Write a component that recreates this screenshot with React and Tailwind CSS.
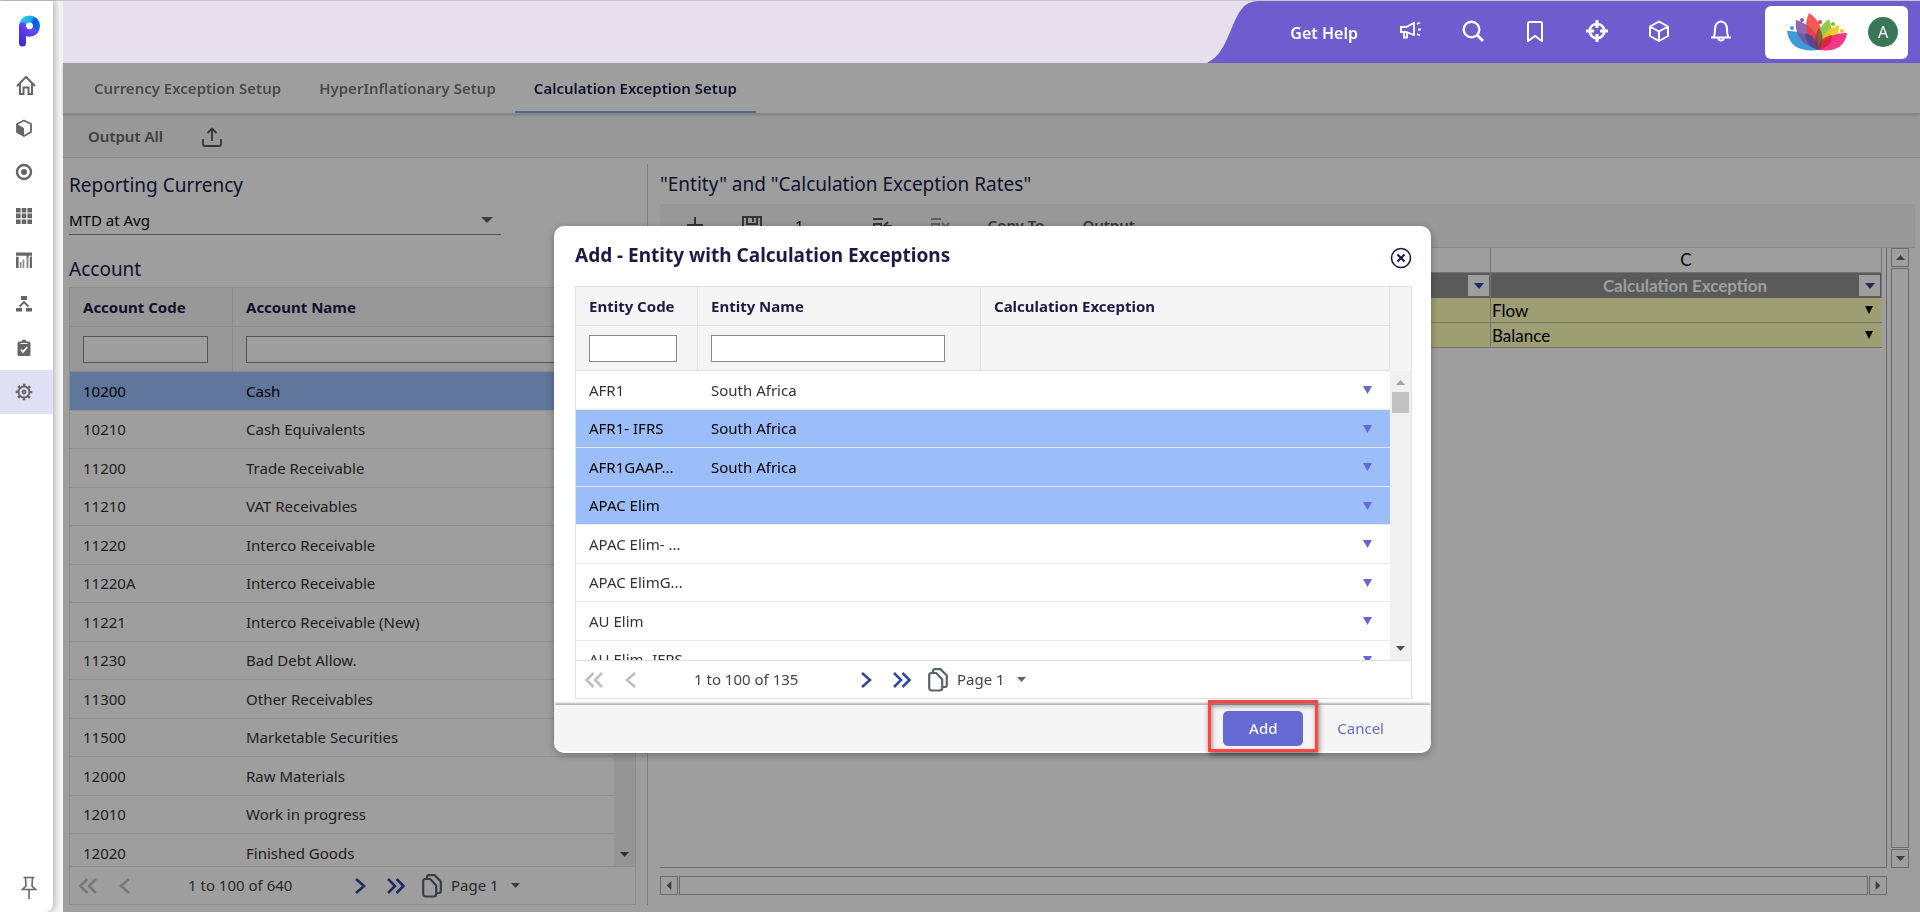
import React, { useState } from "react";
import clsx from "clsx";

const ACCOUNTS = [
  ["10200", "Cash"],
  ["10210", "Cash Equivalents"],
  ["11200", "Trade Receivable"],
  ["11210", "VAT Receivables"],
  ["11220", "Interco Receivable"],
  ["11220A", "Interco Receivable"],
  ["11221", "Interco Receivable (New)"],
  ["11230", "Bad Debt Allow."],
  ["11300", "Other Receivables"],
  ["11500", "Marketable Securities"],
  ["12000", "Raw Materials"],
  ["12010", "Work in progress"],
  ["12020", "Finished Goods"],
];

const ENTITIES = [
  ["AFR1", "South Africa"],
  ["AFR1- IFRS", "South Africa"],
  ["AFR1GAAP...", "South Africa"],
  ["APAC Elim", ""],
  ["APAC Elim- ...", ""],
  ["APAC ElimG...", ""],
  ["AU Elim", ""],
  ["AU Elim- IFRS", ""],
];

const TABS = ["Currency Exception Setup", "HyperInflationary Setup", "Calculation Exception Setup"];

// --- Icons ---
function Triangle({ dir = "down", className }) {
  const points = {
    down: "0,0 10,0 5,6",
    up: "0,6 10,6 5,0",
    left: "8,0 8,6 2,3",
    right: "2,0 2,6 8,3",
  };
  return (
    <svg viewBox="0 0 10 6" preserveAspectRatio="none" className={className} fill="currentColor" aria-hidden="true">
      <polygon points={points[dir]} />
    </svg>
  );
}

function Chevrons({ left, double, className }) {
  return (
    <svg width="20" height="18" viewBox="0 0 20 18" fill="none" stroke="currentColor" strokeWidth="2.6" className={className} aria-hidden="true">
      <g transform={left ? "translate(20 0) scale(-1 1)" : undefined}>
        {double ? <path d="M2 2l7 7-7 7M10.500 2l7 7-7 7" /> : <path d="M6 2l8 7-8 7" />}
      </g>
    </svg>
  );
}

function Logo() {
  return (
    <svg width="24" height="34" viewBox="0 0 24 34" fill="none" aria-hidden="true">
      <defs>
        <linearGradient id="ring" x1="2" y1="4" x2="22" y2="16" gradientUnits="userSpaceOnUse">
          <stop offset="0" stopColor="#35c8f5" />
          <stop offset="0.45" stopColor="#18b2f2" />
          <stop offset="0.6" stopColor="#0a55dc" />
          <stop offset="1" stopColor="#0b6cff" />
        </linearGradient>
        <linearGradient id="stem" x1="2" y1="32" x2="18" y2="12" gradientUnits="userSpaceOnUse">
          <stop offset="0" stopColor="#3d22c4" />
          <stop offset="1" stopColor="#6a4dff" />
        </linearGradient>
      </defs>
      <circle cx="12.500" cy="11" r="7" stroke="url(#ring)" strokeWidth="7" />
      <path d="M5.500 11a7 7 0 0 0 7 7c3 0 5-1.500 6.200-3.800" stroke="url(#stem)" strokeWidth="7" />
      <path d="M5.500 11V28" stroke="url(#stem)" strokeWidth="7" strokeLinecap="round" />
    </svg>
  );
}

function Lotus() {
  return (
    <svg width="62" height="38" viewBox="0 0 62 38" aria-hidden="true">
      <g className="mix-blend-multiply">
        <path d="M1 18c14 0 28 5 32 19C15 39 3 34 1 18z" fill="#3f9bd8" />
        <path d="M10 7c14 4 24 14 23 30C17 33 8 22 10 7z" fill="#7d4fa0" fillOpacity="0.85" />
        <path d="M23 0c12 8 17 22 10 37C20 27 17 13 23 0z" fill="#f03c3c" fillOpacity="0.85" />
        <path d="M43 6c5 12 2 22-10 31C29 22 33 13 43 6z" fill="#7ac231" fillOpacity="0.85" />
        <path d="M53 12c1 12-6 20-20 25C35 22 42 15 53 12z" fill="#f0c419" fillOpacity="0.85" />
        <path d="M61 20C59 34 49 39 33 37C38 25 47 20 61 20z" fill="#f0227c" fillOpacity="0.9" />
        <path d="M19 20c7 2 12 6 14 17C23 34 19 28 19 20z" fill="#3b3f98" fillOpacity="0.7" />
        <path d="M46 22c0 7-4 12-13 15C32 29 36 24 46 22z" fill="#d41f3a" fillOpacity="0.8" />
        <path d="M33 15c5 8 5 15 0 22C28 30 28 23 33 15z" fill="#7b2c35" fillOpacity="0.6" />
      </g>
      <circle cx="6" cy="15" r="2" fill="#3f9bd8" />
      <circle cx="16" cy="7" r="2" fill="#8a5aa8" />
      <circle cx="34" cy="9" r="2" fill="#f03c3c" />
      <circle cx="47" cy="11" r="2" fill="#7ac231" />
      <circle cx="56" cy="18" r="2" fill="#f0c419" />
    </svg>
  );
}

const NAV = [
  {
    label: "Home",
    icon: (
      <g fill="none" stroke="currentColor" strokeWidth="2" transform="translate(2 1)">
        <path d="M1 11L10 2l9 9" />
        <path d="M4 9v10h3.500v-6.500h5V19H16V9" />
      </g>
    ),
  },
  {
    label: "Models",
    icon: (
      <g>
        <path d="M10 2.500l7 3.500v8l-7 4-7-4V6z" fill="none" stroke="currentColor" strokeWidth="1.800" />
        <path d="M3 6l7 4v8l-7-4z" fill="currentColor" />
      </g>
    ),
  },
  {
    label: "Targets",
    icon: (
      <g>
        <circle cx="10" cy="10" r="7" fill="none" stroke="currentColor" strokeWidth="2.400" />
        <circle cx="10" cy="10" r="3" fill="currentColor" />
      </g>
    ),
  },
  {
    label: "Sheets",
    icon: <path d="M2 2h4.600v4.400H2zM7.700 2h4.600v4.400H7.700zM13.400 2H18v4.400h-4.600zM2 7.600h4.600v4.600H2zM7.700 7.600h4.600v4.600H7.700zM13.400 7.600H18v4.600h-4.600zM2 13.400h4.600V18H2zM7.700 13.400h4.600V18H7.700zM13.400 13.400H18V18h-4.600z" fill="currentColor" />,
  },
  {
    label: "Reports",
    icon: (
      <g fill="currentColor">
        <path d="M2 2.500h16v3.300H2zM15.800 6.500H18V18h-2.200zM12.500 5h2v3.500h-2zM2 6.800h2.600V18H2z" />
        <path d="M5.800 12h1.700v6H5.800zM8.600 9.500h1.700V18H8.600zM12.500 8.500h2V18h-2z" fillOpacity="0.75" />
      </g>
    ),
  },
  {
    label: "Structure",
    icon: (
      <g>
        <path d="M7 2h6v4H7zM2 14h6v3.500H2zM12 14h6v3.500h-6z" fill="currentColor" />
        <path d="M5.500 12.500L10 8l4.500 4.500" fill="none" stroke="currentColor" strokeWidth="1.800" />
      </g>
    ),
  },
  {
    label: "Tasks",
    icon: (
      <g>
        <path d="M5 3.500h2.500a2.500 2 0 0 1 5 0H15A1.500 1.500 0 0 1 16.500 5v11.500A1.500 1.500 0 0 1 15 18H5a1.500 1.500 0 0 1-1.500-1.500V5A1.500 1.500 0 0 1 5 3.500z" fill="currentColor" />
        <path d="M6.500 5.500h7" stroke="#fff" strokeWidth="1" />
        <path d="M6.800 11.500l2.200 2.400 4.200-4.800" stroke="#fff" strokeWidth="1.700" fill="none" />
      </g>
    ),
  },
  {
    label: "Settings",
    active: true,
    icon: (
      <g fill="none" stroke="currentColor">
        <circle cx="10" cy="10" r="5.500" strokeWidth="2" />
        <circle cx="10" cy="10" r="7.200" strokeWidth="2.200" strokeDasharray="2.600 3.055" strokeDashoffset="1.300" />
        <circle cx="10" cy="10" r="1.500" strokeWidth="1.800" />
      </g>
    ),
  },
];

const HEADER_ICONS = [
  {
    label: "Announcements",
    icon: (
      <>
        <path d="M1 7h5l8-4v12l-8-3H1zM4 12v5.500h3V12.500" strokeWidth="1.800" />
        <path d="M17 4l3-1.500M18 9.500h3M17 14l3 1.500" strokeWidth="1.800" />
      </>
    ),
  },
  { label: "Search", icon: <><circle cx="9.500" cy="9.500" r="7.800" strokeWidth="2.400" /><path d="M15 15L21 21" strokeWidth="2.800" /></> },
  { label: "Bookmarks", icon: <path d="M4 21V3.500A1.500 1.500 0 0 1 5.500 2h11A1.500 1.500 0 0 1 18 3.500V21l-7-5z" /> },
  {
    label: "Navigate",
    icon: (
      <>
        <circle cx="11" cy="11" r="7.300" strokeWidth="2.600" />
        <path d="M11 0v8M11 14v8M0 11h8M14 11h8" strokeWidth="3" />
      </>
    ),
  },
  { label: "Packages", icon: <path d="M11 1.500l9 5v9.500l-9 5-9-5V6.500zM2 6.500l9 5 9-5M11 11.500V21" strokeLinejoin="round" /> },
  { label: "Notifications", icon: <path d="M1 17.500h20M3.500 17c1.500-2 1.500-4 1.500-8a6 7.500 0 0 1 12 0c0 4 0 6 1.500 8M8.500 18.500a2.500 2 0 0 0 5 0" /> },
];

function Sidebar() {
  return (
    <nav className="z-10 mr-[10px] flex w-[53px] shrink-0 flex-col rounded-br-lg bg-white text-[#666] shadow-[2px_0_6px_rgba(0,0,0,0.25)]">
      <a href="#start" aria-label="Start" className="flex h-[61px] items-center pl-[17px]">
        <Logo />
      </a>
      {NAV.map((item) => (
        <a
          key={item.label}
          href={`#${item.label.toLowerCase()}`}
          aria-label={item.label}
          className={clsx("flex h-11 items-center pl-[14px]", item.active && "bg-[#dfdff5]")}
        >
          <svg width="20" height="20" viewBox="0 0 20 20" className="overflow-visible" aria-hidden="true">{item.icon}</svg>
        </a>
      ))}
      <button aria-label="Pin menu" className="mt-auto mb-3 flex justify-center pl-1">
        <svg width="16" height="24" viewBox="0 0 16 24" fill="none" stroke="currentColor" strokeWidth="1.600" aria-hidden="true">
          <path d="M2.500 1.500h11M4.500 1.500l.5 8.500-3.500 3.500h13L11 10l.5-8.500M8 13.500V23" />
        </svg>
      </button>
    </nav>
  );
}

function Header() {
  return (
    <header className="flex h-[62px] shrink-0 justify-end bg-[#e5e0ec]">
      <svg width="51" height="62" viewBox="0 0 51 62" fill="#6f5ccf" aria-hidden="true">
        <path d="M0 62C14 55 18 42 24 29C32 10 36 1 51 0V62Z" />
      </svg>
      <div className="flex items-center bg-[#6f5ccf] pr-3 pl-8 text-white">
        <a href="#help" className="mr-[42px] pt-[2px] text-base font-semibold">Get Help</a>
        <div className="mr-[33px] flex gap-10 pb-[2px]">
          {HEADER_ICONS.map((item) => (
            <button key={item.label} aria-label={item.label}>
              <svg width="22" height="22" viewBox="0 0 22 22" fill="none" stroke="currentColor" strokeWidth="2" aria-hidden="true">
                {item.icon}
              </svg>
            </button>
          ))}
        </div>
        <div className="flex h-[53px] w-[143px] items-center justify-between rounded-md bg-white pr-[10px] pl-[21px]">
          <Lotus />
          <button aria-label="Account menu" className="flex size-[30px] items-center justify-center rounded-full bg-[#3a7759] text-base">
            A
          </button>
        </div>
      </div>
    </header>
  );
}

function Pager({ range }) {
  return (
    <div className="flex h-[38px] shrink-0 items-center border-t border-[#e0e0e0] pl-2 text-[#444]">
      <button disabled aria-label="First page" className="mr-[17px] text-[#c0c0c0]"><Chevrons left double /></button>
      <button disabled aria-label="Previous page" className="text-[#c0c0c0]"><Chevrons left /></button>
      <span className="w-[208px] pl-[53px] text-[15px]">{range}</span>
      <button aria-label="Next page" className="mr-4 pl-[7px] text-[#34489c]"><Chevrons /></button>
      <button aria-label="Last page" className="mr-4 text-[#34489c]"><Chevrons double /></button>
      <svg width="20" height="24" viewBox="0 0 20 24" fill="none" stroke="#58646e" strokeWidth="2.200" className="mr-[9px]" aria-hidden="true">
        <path d="M1.200 7a2 2 0 0 1 2-2h5l6 6.500V20a2.500 2.500 0 0 1-2.500 2.500H3.700A2.500 2.500 0 0 1 1.200 20z" strokeLinejoin="round" />
        <path d="M5 5V3.200a2 2 0 0 1 2-2h5.500l6.300 6.300V17a2 2 0 0 1-2 2h-2.300" />
      </svg>
      <select aria-label="Page" className="w-[60px] appearance-none bg-transparent text-[15px]">
        <option>Page 1</option>
      </select>
      <Triangle className="h-[5px] w-[9px] text-[#58646e]" />
    </div>
  );
}

function FilterGrid({ columns, rows, selected, picker, thumb, range }) {
  return (
    <div className="flex min-h-0 flex-1 flex-col border border-[#e0e0e0] bg-white">
      <div className="flex min-h-0 flex-1">
        <div className="min-w-0 flex-1 overflow-hidden">
          <table className="w-full table-fixed border-separate border-spacing-0 text-left text-[15px] text-[#333]">
            <colgroup>
              {columns.map((col) => (
                <col key={col.title} className={col.width} />
              ))}
            </colgroup>
            <thead className="bg-[#f5f5f5] text-[#1b1b46]">
              <tr>
                {columns.map((col) => (
                  <th key={col.title} className="h-[39px] border-r border-b border-[#e0e0e0] py-0 pl-[13px] font-bold">
                    {col.title}
                  </th>
                ))}
              </tr>
              <tr>
                {columns.map((col) => (
                  <td key={col.title} className="h-[45px] border-r border-b border-[#e0e0e0] py-0 pr-6 pl-[13px]">
                    {col.filter && (
                      <input
                        type="text"
                        aria-label={`Filter ${col.title}`}
                        className={clsx("block h-[27px] border border-[#888] bg-white px-1", col.filter)}
                      />
                    )}
                  </td>
                ))}
              </tr>
            </thead>
            <tbody>
              {rows.map(([code, name], i) => (
                <tr key={code} className={clsx("group", selected.includes(i) && "bg-[#9bbefb] text-black")}>
                  <td className="h-[38px] border-b border-[#e8e8e8] py-0 pl-[13px] whitespace-nowrap group-odd:h-[39px]">{code}</td>
                  <td className="truncate border-b border-[#e8e8e8] py-0 pl-[13px]">{name}</td>
                  {picker && (
                    <td className="border-b border-[#e8e8e8] py-0 pr-[18px]">
                      <button aria-label={`Calculation exception for ${code}`} className="ml-auto block">
                        <Triangle className="h-2 w-[9px] text-[#6468d0]" />
                      </button>
                    </td>
                  )}
                </tr>
              ))}
            </tbody>
          </table>
        </div>
        <div className="flex w-[21px] shrink-0 flex-col bg-[#f0f0f0]">
          <div className="h-[84px] shrink-0 bg-[#f5f5f5]" />
          <Triangle dir="up" className="mx-auto mt-[9px] h-[5px] w-[9px] text-[#a0a0a0]" />
          {thumb && <div className="mx-auto mt-[7px] h-[21px] w-[17px] bg-[#c1c1c1]" />}
          <Triangle className="mx-auto mt-auto mb-[9px] h-[5px] w-[9px] text-[#505050]" />
        </div>
      </div>
      <Pager range={range} />
    </div>
  );
}

function LeftPanel() {
  return (
    <section className="flex w-[585px] shrink-0 flex-col border-r border-[#ccc] pr-[11px] pl-[6px]">
      <label htmlFor="currency" className="flex h-[42px] items-center text-[19px] text-[#1b1b46]">
        Reporting Currency
      </label>
      <div className="relative w-[432px]">
        <select id="currency" className="h-[29px] w-full appearance-none border-b border-[#888] text-[15px] text-black">
          <option>MTD at Avg</option>
        </select>
        <Triangle className="pointer-events-none absolute top-[11px] right-2 h-[6px] w-3 text-[#58646e]" />
      </div>
      <h2 className="flex h-[52px] items-center pt-[17px] text-[19px] text-[#1b1b46]">Account</h2>
      <FilterGrid
        columns={[
          { title: "Account Code", width: "w-[163px]", filter: "w-[125px]" },
          { title: "Account Name", filter: "w-full" },
        ]}
        rows={ACCOUNTS}
        selected={[0]}
        range="1 to 100 of 640"
      />
    </section>
  );
}

function SheetToolbar() {
  return (
    <div className="mr-[5px] flex h-11 shrink-0 items-center border-b border-[#ddd] bg-[#f5f5f5] pl-[26px] text-[15px] font-semibold text-[#555]">
      <button aria-label="Add row" className="mr-[38px]">
        <svg width="18" height="18" viewBox="0 0 18 18" stroke="currentColor" strokeWidth="2"><path d="M9 0v16M1 8h16" /></svg>
      </button>
      <button aria-label="Save" className="mr-[33px]">
        <svg width="20" height="20" viewBox="0 0 20 20" fill="none" stroke="currentColor" strokeWidth="2"><path d="M1 1h18v18H4l-3-3zM5 1v7h10V1M11 2v4" /></svg>
      </button>
      <span className="mr-[68px] font-normal text-black">1</span>
      <button aria-label="Insert rows" className="mr-[38px]">
        <svg width="20" height="20" viewBox="0 0 20 20" fill="none" stroke="currentColor" strokeWidth="2"><path d="M1 3h10M2 8h7v9H2zM20 10h-7M16 6l-4 4 4 4" /></svg>
      </button>
      <button disabled aria-label="Delete rows" className="mr-[38px] text-[#999]">
        <svg width="20" height="20" viewBox="0 0 20 20" fill="none" stroke="currentColor" strokeWidth="2"><path d="M1 3h10M2 8h7v9H2zM12 7l7 8M19 7l-7 8" /></svg>
      </button>
      <button className="mr-[38px]">Copy To</button>
      <button>Output</button>
    </div>
  );
}

function ColumnFilter() {
  return (
    <button aria-label="Filter column" className="ml-auto flex size-[21px] items-center justify-center bg-white">
      <Triangle className="h-[6px] w-[10px] text-[#34489c]" />
    </button>
  );
}

function ExceptionCell({ value }) {
  return (
    <td className="relative h-[25px] border-b border-[#bbb] p-0">
      <select aria-label="Calculation Exception" defaultValue={value} className="block h-6 w-full appearance-none pl-px text-[17px]">
        <option>Flow</option>
        <option>Balance</option>
      </select>
      <Triangle className="pointer-events-none absolute top-2 right-[9px] h-2 w-2 text-black" />
    </td>
  );
}

function RightPanel() {
  return (
    <section className="flex min-w-0 flex-1 flex-col pl-3">
      <h2 className="flex h-10 shrink-0 items-center pt-px text-[19px] text-[#1b1b46]">"Entity" and "Calculation Exception Rates"</h2>
      <SheetToolbar />
      <div className="flex min-h-0 flex-1 gap-1 pr-[11px]">
        <div className="min-w-0 flex-1 border-r border-b border-[#adadad] pr-1">
          <table className="w-full table-fixed border-separate border-spacing-0 font-['Lato','Liberation_Sans',sans-serif] text-black">
            <colgroup>
              <col className="w-10" />
              <col />
              <col />
              <col className="w-[391px]" />
            </colgroup>
            <thead>
              <tr>
                <td className="h-[25px] border-r border-b border-[#bbb]" />
                <td className="border-r border-b border-[#bbb]" />
                <td className="border-r border-b border-[#bbb]" />
                <th scope="col" className="border-r border-b border-[#bbb] p-0 text-[17px] leading-6 font-normal">C</th>
              </tr>
            </thead>
            <tbody>
              <tr className="bg-[#919191] text-white">
                <td className="h-[25px] border-r border-[#bbb] p-0" />
                <td className="border-r border-[#bbb] p-0" />
                <td className="border-r border-[#bbb] p-0 pr-px"><ColumnFilter /></td>
                <th className="border-r border-[#bbb] p-0 pr-px">
                  <div className="flex items-center">
                    <span className="flex-1 pl-5 text-[17px] leading-5 font-bold">Calculation Exception</span>
                    <ColumnFilter />
                  </div>
                </th>
              </tr>
              {["Flow", "Balance"].map((value) => (
                <tr key={value} className="bg-[#fdffb8]">
                  <td className="border-r border-b border-[#bbb] p-0" />
                  <td className="border-r border-b border-[#bbb] p-0" />
                  <td className="border-r border-b border-[#bbb] p-0" />
                  <ExceptionCell value={value} />
                </tr>
              ))}
            </tbody>
          </table>
        </div>
        <div className="flex w-[18px] flex-col gap-px text-[#666]">
          <button aria-label="Scroll up" className="flex h-[19px] items-center justify-center border border-[#adadad]">
            <Triangle dir="up" className="h-[5px] w-[9px]" />
          </button>
          <div className="flex-1 border border-[#adadad]" />
          <button aria-label="Scroll down" className="flex h-[19px] items-center justify-center border border-[#adadad]">
            <Triangle className="h-[5px] w-[9px]" />
          </button>
        </div>
      </div>
      <div className="mt-2 mr-[33px] mb-[10px] flex h-[19px] shrink-0 gap-px text-[#666]">
        <button aria-label="Scroll left" className="flex w-[18px] items-center justify-center border border-[#adadad]">
          <Triangle dir="left" className="h-[9px] w-2" />
        </button>
        <div className="flex-1 border border-[#adadad]" />
        <button aria-label="Scroll right" className="flex w-[18px] items-center justify-center border border-[#adadad]">
          <Triangle dir="right" className="h-[9px] w-2" />
        </button>
      </div>
    </section>
  );
}

function AddDialog({ onClose }) {
  return (
    <div role="dialog" aria-labelledby="dialog-title" className="flex h-[527px] w-[877px] flex-col rounded-[10px] bg-white shadow-[0_2px_8px_rgba(0,0,0,0.3)]">
      <div className="flex h-[60px] shrink-0 items-center justify-between pr-[19px] pb-[2px] pl-[21px]">
        <h1 id="dialog-title" className="text-[19px] font-bold text-[#1b1b46]">Add - Entity with Calculation Exceptions</h1>
        <button aria-label="Close" onClick={onClose} className="pt-[6px]">
          <svg width="22" height="22" viewBox="0 0 22 22" fill="none" stroke="#1b1b46" aria-hidden="true">
            <circle cx="11" cy="11" r="9.500" strokeWidth="1.600" />
            <path d="M7.500 7.500l7 7M14.500 7.500l-7 7" strokeWidth="2.200" />
          </svg>
        </button>
      </div>
      <div className="mx-[19px] mb-[6px] ml-[21px] flex min-h-0 flex-1">
        <FilterGrid
          columns={[
            { title: "Entity Code", width: "w-[122px]", filter: "w-[88px]" },
            { title: "Entity Name", width: "w-[283px]", filter: "w-[234px]" },
            { title: "Calculation Exception" },
          ]}
          rows={ENTITIES}
          selected={[1, 2, 3]}
          picker
          thumb
          range="1 to 100 of 135"
        />
      </div>
      <div className="mx-px mb-[2px] flex h-[46px] shrink-0 items-center justify-end rounded-b-[10px] bg-[#f5f5f5] pr-[46px] shadow-[0_-2px_2px_rgba(0,0,0,0.3)]">
        <div className="relative mr-[34px]">
          <button className="block h-[35px] w-20 rounded-[5px] bg-[#6569d2] text-[15px] font-medium text-white">Add</button>
          {/* highlight frame around the primary action */}
          <div className="pointer-events-none absolute -inset-x-[15px] -top-[11px] -bottom-[6px] border-3 border-[#ff4444] shadow-[1px_3px_5px_rgba(0,0,0,0.5),inset_1px_3px_5px_rgba(0,0,0,0.4)]" />
        </div>
        <button onClick={onClose} className="text-[15px] text-[#6569d2]">Cancel</button>
      </div>
    </div>
  );
}

export default function App() {
  const [activeTab, setActiveTab] = useState(2);
  const [dialogOpen, setDialogOpen] = useState(true);

  return (
    <div className="flex h-screen min-h-[600px] border-t border-[#c8c8c8] bg-[#f4f4f4] font-['Noto_Sans','Open_Sans',sans-serif]">
      <Sidebar />
      <div className="flex min-w-0 flex-1 flex-col">
        <Header />
        <main className="relative flex min-h-0 flex-1 flex-col bg-white">
          <div role="tablist" className="z-0 flex h-[51px] shrink-0 border-b border-[#d8d8d8] pl-3 shadow-[0_1px_3px_rgba(0,0,0,0.2)]">
            {TABS.map((tab, i) => (
              <button
                key={tab}
                role="tab"
                aria-selected={activeTab === i}
                onClick={() => setActiveTab(i)}
                className={clsx(
                  "border-b-2 px-[19px] pt-[3px] text-[15px] font-semibold",
                  activeTab === i ? "border-[#7da6f5] text-[#1b1b46]" : "border-transparent text-[#777]"
                )}
              >
                {tab}
              </button>
            ))}
          </div>
          <div className="flex h-11 shrink-0 items-center gap-[39px] border-b border-[#d8d8d8] bg-[#f5f5f5] pt-[2px] pl-[25px] text-[#666]">
            <button className="text-[15px] font-semibold">Output All</button>
            <button aria-label="Export">
              <svg width="20" height="20" viewBox="0 0 20 20" fill="none" stroke="#555" strokeWidth="1.800" aria-hidden="true">
                <path d="M10 14V1.500M5.500 6L10 1.500 14.500 6M1 12v5a2 2 0 0 0 2 2h14a2 2 0 0 0 2-2v-5" />
              </svg>
            </button>
          </div>
          <div className="flex min-h-0 flex-1 pt-[6px] pb-[7px]">
            <LeftPanel />
            <RightPanel />
          </div>

          {dialogOpen && (
            <div className="absolute inset-0 z-20 flex items-start justify-center overflow-hidden bg-black/38 pt-[163px] pl-[2px]">
              <AddDialog onClose={() => setDialogOpen(false)} />
            </div>
          )}
        </main>
      </div>
    </div>
  );
}
